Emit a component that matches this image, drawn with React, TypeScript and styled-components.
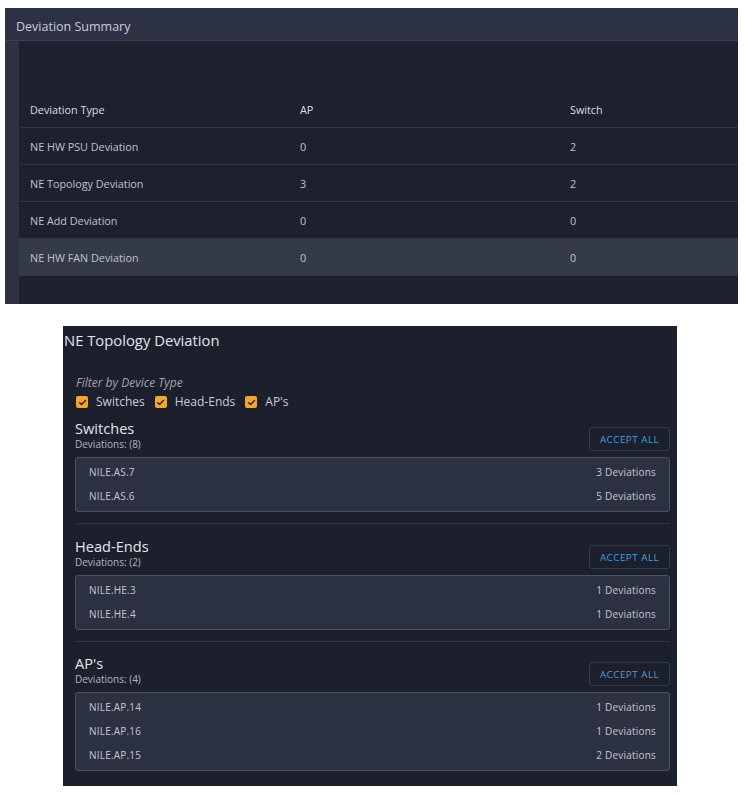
import React from "react";
import styled, { createGlobalStyle } from "styled-components";

const Global = createGlobalStyle`
  html, body { margin: 0; padding: 0; background: #ffffff; }
  body { font-family: "Open Sans", "Liberation Sans", sans-serif; }
  * { box-sizing: border-box; }
`;

const Page = styled.div`
  display: flex;
  flex-direction: column;
  align-items: flex-start;
  padding: 8px 6px 0 5px;
`;

const SummaryPanel = styled.section`
  width: 733px;
  height: 296px;
  display: flex;
  flex-direction: column;
  background: #2c3243;
`;

const SummaryHeader = styled.div`
  height: 33px;
  flex: none;
  display: flex;
  align-items: center;
  padding-left: 11px;
  padding-top: 5px;
  font-size: 12.5px;
  color: #c9cdd5;
  border-bottom: 1px solid #3a4050;
`;

const SummaryBody = styled.div`
  flex: 1;
  display: flex;
  padding-left: 14px;
`;

const TableArea = styled.div`
  flex: 1;
  background: #1d212d;
  overflow: hidden;
  padding-top: 50px;
`;

const Row = styled.div<{ $highlight?: boolean; $head?: boolean }>`
  display: grid;
  grid-template-columns: 270px 270px 270px;
  height: 37px;
  align-items: center;
  border-bottom: 1px solid #2f3441;
  background: ${(p) => (p.$highlight ? "#343a46" : "transparent")};
  color: ${(p) => (p.$head ? "#dcdfe4" : "#bfc3cb")};
  font-size: 10.8px;
`;

const Cell = styled.div`
  padding-left: 11px;
  white-space: nowrap;
`;

const TopoPanel = styled.section`
  margin-top: 22px;
  margin-left: 58px;
  width: 614px;
  background: #1c202c;
  padding: 4px 7px 15px 0;
  display: flex;
  flex-direction: column;
`;

const TopoTitle = styled.h2`
  margin: 0;
  padding-left: 1px;
  font-size: 14.8px;
  font-weight: 400;
  color: #e2e5ea;
  line-height: 20px;
`;

const TopoBody = styled.div`
  padding-left: 12px;
  display: flex;
  flex-direction: column;
`;

const FilterLabel = styled.div`
  margin-top: 26px;
  padding-left: 1px;
  font-size: 12px;
  font-style: italic;
  color: #9ea3ae;
  line-height: 14px;
`;

const FilterRow = styled.div`
  display: flex;
  align-items: center;
  gap: 10px;
  margin-top: 5px;
  padding-left: 1px;
`;

const CheckItem = styled.label`
  display: flex;
  align-items: center;
  gap: 8px;
  font-size: 12px;
  color: #c9cdd5;
  line-height: 14px;
`;

const Box = styled.span`
  width: 12px;
  height: 12px;
  border-radius: 2px;
  background: #f5a623;
  display: inline-flex;
  align-items: center;
  justify-content: center;
`;

const Section = styled.div<{ $first?: boolean }>`
  display: flex;
  flex-direction: column;
  padding-top: ${(p) => (p.$first ? "10px" : "13px")};
  padding-bottom: 11px;
  border-bottom: 1px solid #2f3441;
  &:last-child {
    border-bottom: none;
    padding-bottom: 0;
    padding-top: 12px;
  }
`;

const SectionHead = styled.div`
  display: flex;
  justify-content: space-between;
  align-items: flex-end;
`;

const SectionTitles = styled.div`
  display: flex;
  flex-direction: column;
`;

const SectionTitle = styled.div`
  font-size: 14.6px;
  color: #e2e5ea;
  line-height: 18px;
`;

const SectionSub = styled.div`
  font-size: 10px;
  color: #b2b6bf;
  line-height: 13px;
  margin-top: 1px;
`;

const AcceptButton = styled.button`
  width: 81px;
  height: 24px;
  background: transparent;
  border: 1px solid #2b3e52;
  border-radius: 3px;
  color: #4a9fd9;
  font-family: inherit;
  font-size: 9.8px;
  letter-spacing: 0.5px;
  padding: 0;
  cursor: pointer;
`;

const ListBox = styled.div`
  margin-top: 6px;
  background: #2c3142;
  border: 1px solid #4b5162;
  border-radius: 3px;
  padding: 2px 13px 3px 13px;
  display: flex;
  flex-direction: column;
`;

const ListRow = styled.div`
  display: flex;
  justify-content: space-between;
  align-items: center;
  height: 24px;
  font-size: 10px;
  letter-spacing: 0.2px;
  color: #c3c7cf;
`;

const Check = () => (
  <svg width="9" height="9" viewBox="0 0 10 10">
    <polyline points="1.8,5.2 4,7.3 8.3,2.7" fill="none" stroke="#2a2418" strokeWidth="1.6" strokeLinecap="round" strokeLinejoin="round" />
  </svg>
);

const summaryRows = [
  { type: "NE HW PSU Deviation", ap: "0", sw: "2" },
  { type: "NE Topology Deviation", ap: "3", sw: "2" },
  { type: "NE Add Deviation", ap: "0", sw: "0" },
  { type: "NE HW FAN Deviation", ap: "0", sw: "0", hl: true },
];

const sections = [
  {
    title: "Switches",
    count: 8,
    items: [
      ["NILE.AS.7", "3 Deviations"],
      ["NILE.AS.6", "5 Deviations"],
    ],
  },
  {
    title: "Head-Ends",
    count: 2,
    items: [
      ["NILE.HE.3", "1 Deviations"],
      ["NILE.HE.4", "1 Deviations"],
    ],
  },
  {
    title: "AP's",
    count: 4,
    items: [
      ["NILE.AP.14", "1 Deviations"],
      ["NILE.AP.16", "1 Deviations"],
      ["NILE.AP.15", "2 Deviations"],
    ],
  },
];

export default function App() {
  return (
    <>
      <Global />
      <Page>
        <SummaryPanel>
          <SummaryHeader>Deviation Summary</SummaryHeader>
          <SummaryBody>
            <TableArea>
              <Row $head>
                <Cell>Deviation Type</Cell>
                <Cell>AP</Cell>
                <Cell>Switch</Cell>
              </Row>
              {summaryRows.map((r) => (
                <Row key={r.type} $highlight={r.hl}>
                  <Cell>{r.type}</Cell>
                  <Cell>{r.ap}</Cell>
                  <Cell>{r.sw}</Cell>
                </Row>
              ))}
            </TableArea>
          </SummaryBody>
        </SummaryPanel>

        <TopoPanel>
          <TopoTitle>NE Topology Deviation</TopoTitle>
          <TopoBody>
            <FilterLabel>Filter by Device Type</FilterLabel>
            <FilterRow>
              {["Switches", "Head-Ends", "AP's"].map((l) => (
                <CheckItem key={l}>
                  <Box>
                    <Check />
                  </Box>
                  {l}
                </CheckItem>
              ))}
            </FilterRow>
            {sections.map((s, i) => (
              <Section key={s.title} $first={i === 0}>
                <SectionHead>
                  <SectionTitles>
                    <SectionTitle>{s.title}</SectionTitle>
                    <SectionSub>Deviations: ({s.count})</SectionSub>
                  </SectionTitles>
                  <AcceptButton>ACCEPT ALL</AcceptButton>
                </SectionHead>
                <ListBox>
                  {s.items.map(([n, d]) => (
                    <ListRow key={n}>
                      <span>{n}</span>
                      <span>{d}</span>
                    </ListRow>
                  ))}
                </ListBox>
              </Section>
            ))}
          </TopoBody>
        </TopoPanel>
      </Page>
    </>
  );
}
